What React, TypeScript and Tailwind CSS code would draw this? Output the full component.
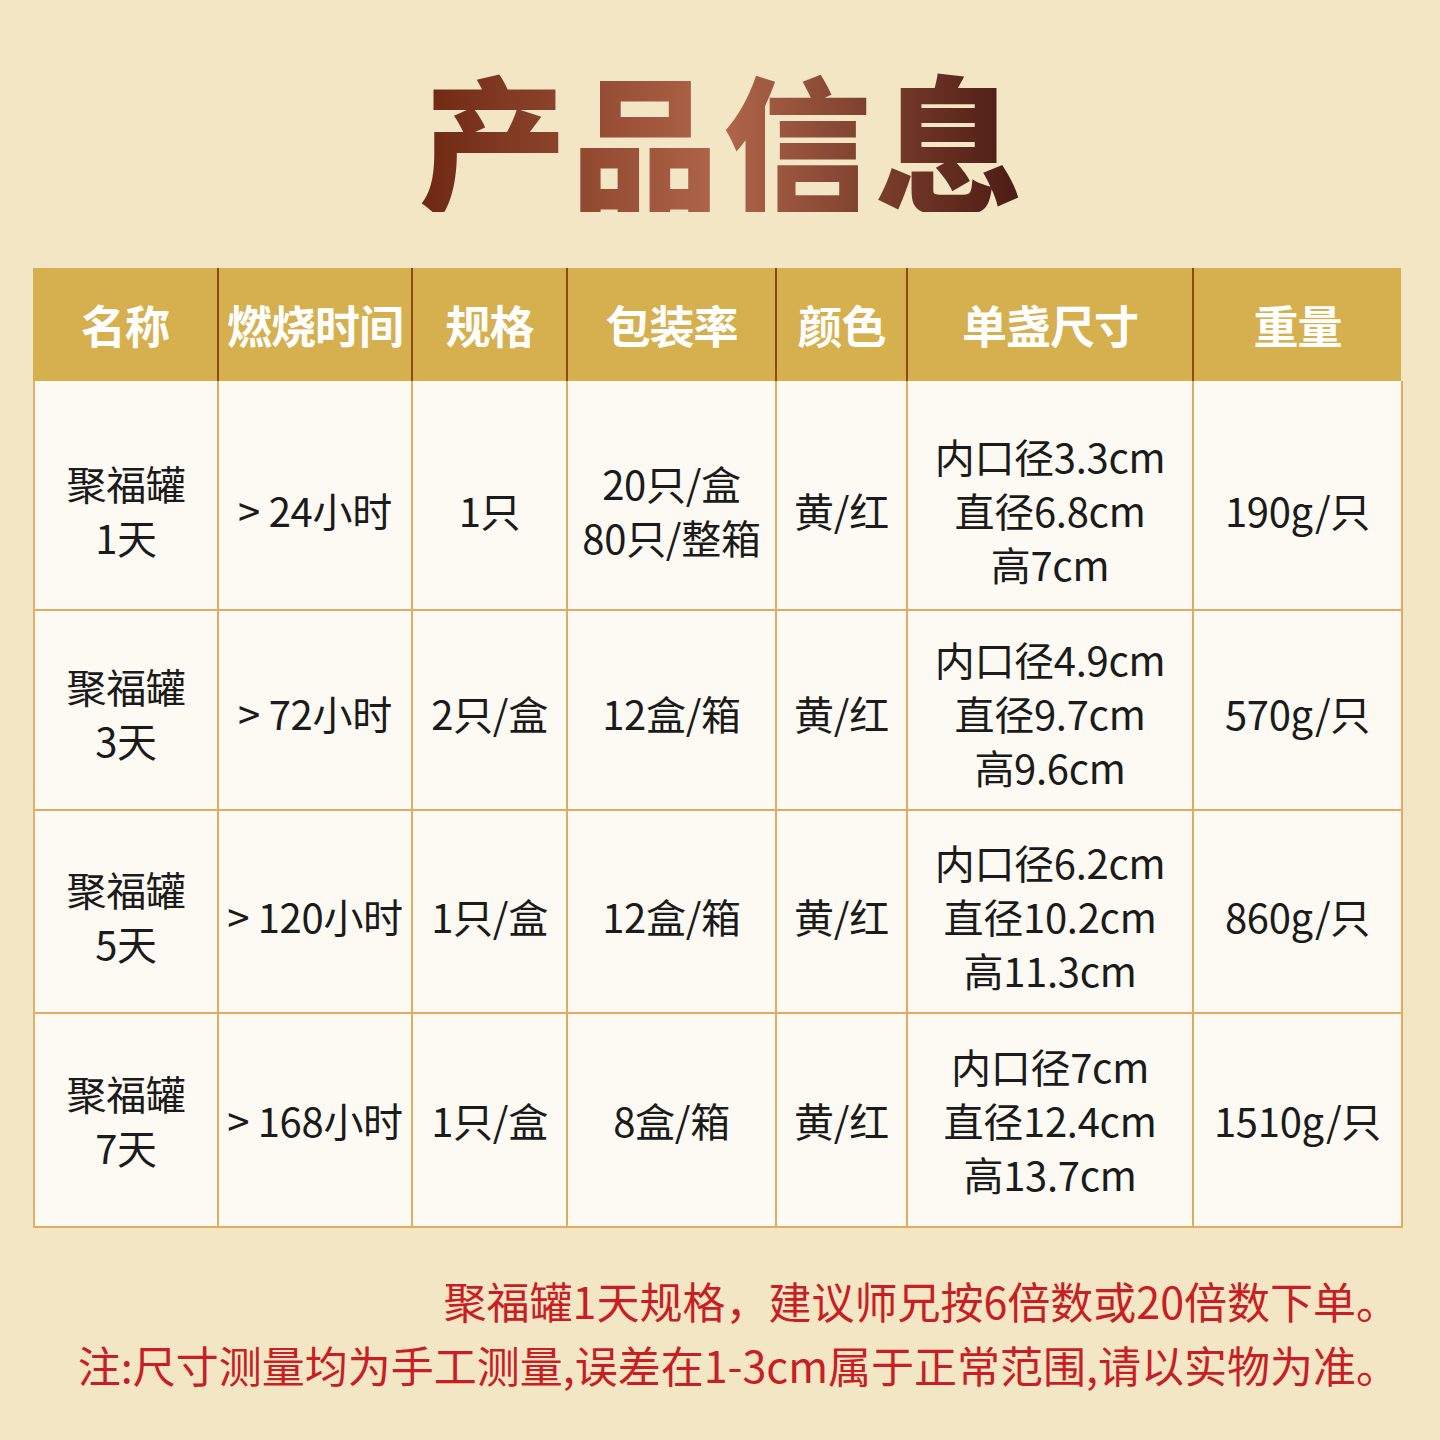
import React from 'react';

const font = { fontFamily: '"Noto Sans CJK SC", "Noto Sans", sans-serif' };

const cols = ['名称', '燃烧时间', '规格', '包装率', '颜色', '单盏尺寸', '重量'];

const rows = [
  { h: 'h-[230px] pt-[30px]', cells: [['聚福罐', '1天'], ['> 24小时'], ['1只'], ['20只/盒', '80只/整箱'], ['黄/红'], ['内口径3.3cm', '直径6.8cm', '高7cm'], ['190g/只']] },
  { h: 'h-[200px] pt-[6px]', cells: [['聚福罐', '3天'], ['> 72小时'], ['2只/盒'], ['12盒/箱'], ['黄/红'], ['内口径4.9cm', '直径9.7cm', '高9.6cm'], ['570g/只']] },
  { h: 'h-[203px] pt-[8px]', cells: [['聚福罐', '5天'], ['> 120小时'], ['1只/盒'], ['12盒/箱'], ['黄/红'], ['内口径6.2cm', '直径10.2cm', '高11.3cm'], ['860g/只']] },
  { h: 'h-[214px]', cells: [['聚福罐', '7天'], ['> 168小时'], ['1只/盒'], ['8盒/箱'], ['黄/红'], ['内口径7cm', '直径12.4cm', '高13.7cm'], ['1510g/只']] },
];

const grid = 'grid grid-cols-[184px_194px_155px_209px_131px_286px_209px]';

export default function App() {
  return (
    <div className="w-[1440px] h-[1440px] bg-[#f2e6c5] flex flex-col pl-[33px]" style={font}>
      {/* Title */}
      <div className="w-[1368px] h-[268px] flex items-center justify-center pt-[8px] pl-[12px]">
        <h1 className="text-[148px] leading-none font-black tracking-[4px] bg-gradient-to-r from-[#6e2812] via-[#b0664a] to-[#4a1a12] bg-clip-text text-transparent">
          产品信息
        </h1>
      </div>

      {/* Table */}
      <div className="w-[1368px]">
        <div className={`${grid} h-[113px] bg-[#d6b04f]`}>
          {cols.map((c, i) => (
            <div
              key={c}
              className={`flex items-center justify-center text-white font-bold text-[45px] tracking-[-1px] ${i > 0 ? 'border-l-2 border-[#8c4a12]' : ''}`}
            >
              {c}
            </div>
          ))}
        </div>
        <div className="border-l-2 border-[#e2b06a]">
          {rows.map((r, ri) => (
            <div key={ri} className={`${grid} bg-[#fcfaf2]`}>
              {r.cells.map((lines, ci) => (
                <div
                  key={ci}
                  className={`${r.h} flex flex-col items-center justify-center border-r-2 border-b-2 border-[#e2ab62] text-[#1b1b1b] text-[40px] leading-[54px] tracking-[-0.3px]`}
                >
                  {lines.map((l) => (
                    <div key={l}>{l}</div>
                  ))}
                </div>
              ))}
            </div>
          ))}
        </div>
      </div>

      {/* Notes */}
      <div className="w-[1368px] mt-[40px] flex flex-col items-end text-[#c81e24] text-[43px] leading-[64px] pr-[2px]">
        <div>聚福罐1天规格，建议师兄按6倍数或20倍数下单。</div>
        <div>注:尺寸测量均为手工测量,误差在1-3cm属于正常范围,请以实物为准。</div>
      </div>
    </div>
  );
}
